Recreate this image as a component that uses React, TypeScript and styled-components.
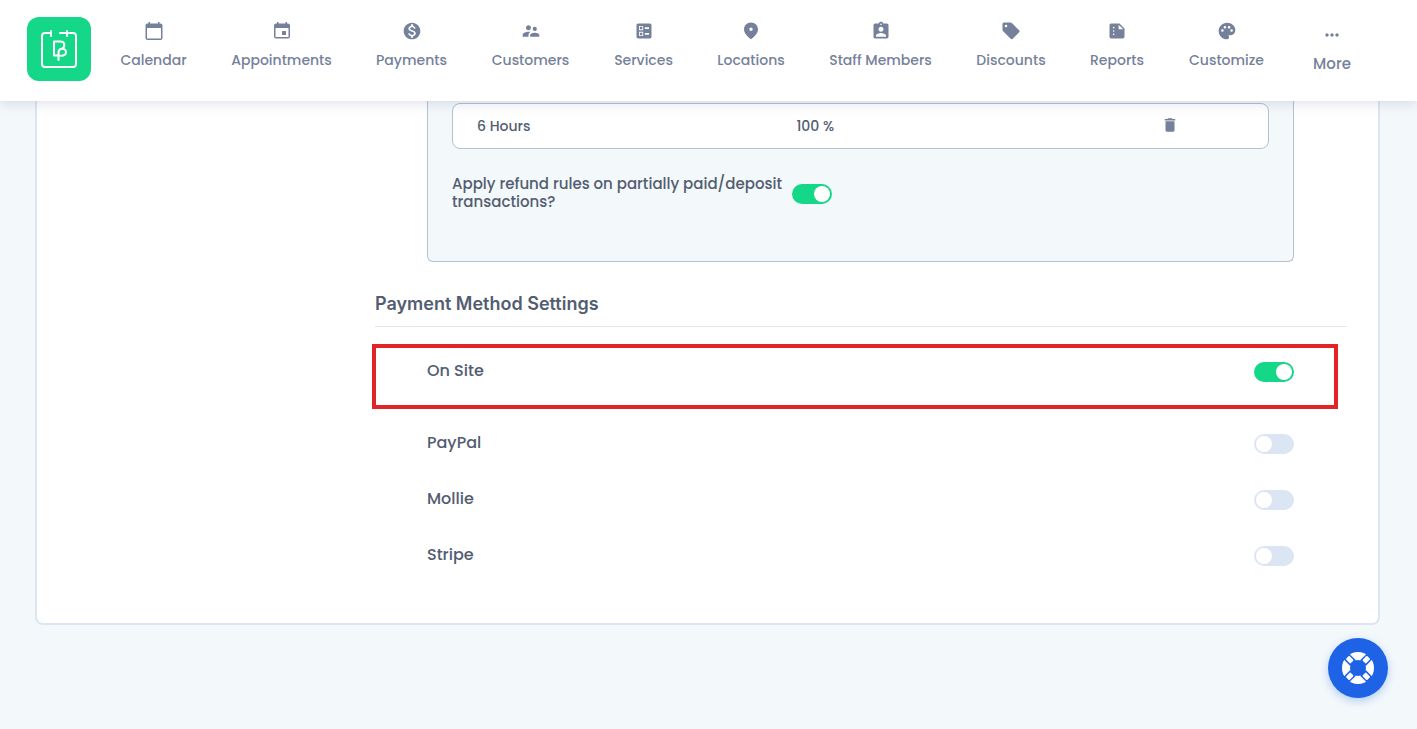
import React, { useState } from 'react';
import styled, { createGlobalStyle } from 'styled-components';
import {
  MdAssignmentInd,
  MdBallot,
  MdDelete,
  MdMonetizationOn,
  MdMoreHoriz,
  MdPalette,
  MdSummarize,
  MdSupervisorAccount,
} from 'react-icons/md';

const GlobalStyle = createGlobalStyle`
  *, *::before, *::after { box-sizing: border-box; }
  body {
    margin: 0;
    background: #f3f8fb;
    color: #535d71;
    font-family: Poppins, Inter, sans-serif;
  }
`;

const Page = styled.div`
  min-height: 100vh;
`;

const Header = styled.header`
  position: sticky;
  top: 0;
  z-index: 2;
  display: flex;
  align-items: flex-start;
  height: 101px;
  padding: 17px 40px 0 27px;
  background: #fff;
  box-shadow: 0 2px 12px rgba(83, 93, 145, 0.2);
`;

const LogoLink = styled.a`
  display: block;
  flex: none;
  width: 64px;
  height: 64px;
  margin-right: 7px;
  border-radius: 12px;
  background: #14d788;
`;

const Nav = styled.nav`
  flex: 1;
  display: grid;
  grid-template-columns: 111fr 145fr 115fr 123fr 103fr 112fr 147fr 114fr 98fr 121fr 90fr;
`;

const NavLink = styled.a<{ $low?: boolean }>`
  display: flex;
  flex-direction: column;
  align-items: center;
  gap: 9px;
  padding-top: ${(p) => (p.$low ? 8 : 4)}px;
  color: #75819a;
  font-size: ${(p) => (p.$low ? 15 : 14)}px;
  font-weight: 500;
  line-height: 20px;
  white-space: nowrap;
  text-decoration: none;

  svg {
    width: 20px;
    height: 20px;
  }
`;

const Card = styled.main`
  margin: 0 37px 104px 35px;
  padding: 0 31px 30px 338px;
  border: 2px solid #dce5f1;
  border-top: 0;
  border-radius: 0 0 8px 8px;
  background: #fff;
`;

const RefundPanel = styled.section`
  margin: 0 53px 0 52px;
  padding: 2px 24px 50px;
  border: 1px solid #b4c0d4;
  border-top: 0;
  border-radius: 0 0 6px 6px;
  background: #f3f8fb;
`;

const RuleRow = styled.div`
  display: grid;
  grid-template-columns: 319fr 364fr 107fr;
  align-items: center;
  height: 46px;
  padding-left: 24px;
  border: 1px solid #b4c0d4;
  border-radius: 8px;
  background: #fff;
  font-size: 14px;
  font-weight: 500;
  line-height: 20px;
`;

const IconButton = styled.button`
  justify-self: start;
  display: flex;
  padding: 0 0 2px;
  border: 0;
  background: none;
  color: #75819a;
  cursor: pointer;

  svg {
    width: 18px;
    height: 18px;
  }
`;

const PartialRule = styled.div`
  display: flex;
  align-items: center;
  gap: 6px;
  padding-top: 26px;
`;

const PartialLabel = styled.label`
  width: 334px;
  font-size: 15px;
  font-weight: 500;
  line-height: 18px;
`;

const SectionTitle = styled.h2`
  margin: 28px 0 17px;
  padding-bottom: 8px;
  border-bottom: 1px solid #e0e7ef;
  font-family: Inter, sans-serif;
  font-size: 18px;
  font-weight: 600;
  line-height: 28px;
`;

const MethodRow = styled.div<{ $highlighted?: boolean }>`
  display: flex;
  align-items: flex-start;
  justify-content: space-between;
  height: ${(p) => (p.$highlighted ? 65 : 56)}px;
  margin: ${(p) => (p.$highlighted ? '0 9px 16px -3px' : '0')};
  padding: ${(p) => (p.$highlighted ? '13px 40px 0 51px' : '8px 53px 0 52px')};
  border: ${(p) => (p.$highlighted ? '4px solid #e02427' : '0')};
`;

const MethodLabel = styled.label`
  font-size: 16px;
  font-weight: 500;
  line-height: 20px;
`;

const Toggle = styled.input`
  appearance: none;
  flex: none;
  width: 40px;
  height: 20px;
  margin: 1px 0 0;
  padding: 2px;
  border-radius: 10px;
  background: #dce5f3;
  cursor: pointer;

  &::before {
    content: '';
    display: block;
    width: 16px;
    height: 16px;
    border-radius: 50%;
    background: #fff;
  }

  &:checked {
    background: #14d788;
  }

  &:checked::before {
    margin-left: 20px;
  }
`;

const HelpButton = styled.button`
  position: fixed;
  right: 29px;
  bottom: 31px;
  z-index: 3;
  display: grid;
  place-items: center;
  width: 60px;
  height: 60px;
  padding: 0;
  border: 0;
  border-radius: 50%;
  background: #1e63e6;
  box-shadow: 0 3px 8px rgba(30, 99, 230, 0.3);
  cursor: pointer;
`;

const Logo = () => (
  <svg width="64" height="64" viewBox="0 0 64 64" fill="none" stroke="#fff" strokeWidth="2" strokeLinecap="round" strokeLinejoin="round">
    <path d="M24 16H18Q15 16 15 19V47Q15 50 18 50H46Q49 50 49 47V19Q49 16 46 16H33" />
    <path d="M24 14V19M40 14V19" />
    <path d="M31.500 38.500H27V24.500H33.500C38.500 24.500 38.500 31 34 32C31.500 32.500 31.500 34 31.500 36V43M31.500 36C31.500 30 39 31 39 35C39 39 34 39.500 31.500 38" />
  </svg>
);

const CalendarIcon = () => (
  <svg viewBox="0 0 20 20" fill="currentColor">
    <path fillRule="evenodd" d="M4.500 1H6v1.500h8V1h1.500v1.500h1q2 0 2 2V17q0 2-2 2h-13q-2 0-2-2V4.500q0-2 2-2h1zM3 7v10.500h14V7z" />
  </svg>
);

const EventIcon = () => (
  <svg viewBox="0 0 20 20" fill="currentColor">
    <path fillRule="evenodd" d="M5 1h1.500v1.500h7V1H15v1.500h1q2 0 2 2v11q0 2-2 2H4q-2 0-2-2v-11q0-2 2-2h1zM3.500 7v9h13V7z" />
    <rect x="10" y="10" width="4" height="4" rx="0.500" />
  </svg>
);

const PinIcon = () => (
  <svg viewBox="0 0 20 20" fill="currentColor">
    <path fillRule="evenodd" d="M10 1.500c4 0 7 3 7 6.800 0 4.200-3.500 7.400-7 10-3.500-2.600-7-5.800-7-10 0-3.800 3-6.800 7-6.800zm0 5.100a1.700 1.700 0 1 0 0 3.400 1.700 1.700 0 0 0 0-3.400z" />
  </svg>
);

const TagIcon = () => (
  <svg viewBox="0 0 20 20" fill="currentColor">
    <path fillRule="evenodd" d="M3 1.500h6.500q.8 0 1.400.6l7.200 7.200q1 1 0 2l-6.400 6.400q-1 1-2 0L2.100 10.200q-.6-.6-.6-1.400V3q0-1.500 1.500-1.500zM5 3.700a1.300 1.300 0 1 0 0 2.600 1.300 1.300 0 0 0 0-2.600z" />
  </svg>
);

const LifebuoyIcon = () => (
  <svg width="32" height="32" viewBox="0 0 32 32">
    <circle cx="16" cy="16" r="12" fill="none" stroke="#fff" strokeWidth="8" />
    {[45, 135, 225, 315].map((angle) => (
      <g key={angle} transform={`rotate(${angle} 16 16)`}>
        <rect x="12" y="-1" width="8" height="10" fill="#1e63e6" />
        <rect x="13.500" y="1" width="5" height="6.500" rx="1" fill="#fff" />
      </g>
    ))}
  </svg>
);

const NAV_ITEMS = [
  { label: 'Calendar', icon: <CalendarIcon /> },
  { label: 'Appointments', icon: <EventIcon /> },
  { label: 'Payments', icon: <MdMonetizationOn /> },
  { label: 'Customers', icon: <MdSupervisorAccount /> },
  { label: 'Services', icon: <MdBallot /> },
  { label: 'Locations', icon: <PinIcon /> },
  { label: 'Staff Members', icon: <MdAssignmentInd /> },
  { label: 'Discounts', icon: <TagIcon /> },
  { label: 'Reports', icon: <MdSummarize /> },
  { label: 'Customize', icon: <MdPalette /> },
  { label: 'More', icon: <MdMoreHoriz />, low: true },
];

const METHODS = ['On Site', 'PayPal', 'Mollie', 'Stripe'];

export default function App() {
  const [partialRefund, setPartialRefund] = useState(true);
  const [enabled, setEnabled] = useState<Record<string, boolean>>({ 'On Site': true });

  return (
    <Page>
      <GlobalStyle />
      <Header>
        <LogoLink href="#home" aria-label="Home">
          <Logo />
        </LogoLink>
        <Nav>
          {NAV_ITEMS.map((item) => (
            <NavLink key={item.label} href={`#${item.label}`} $low={item.low}>
              {item.icon}
              {item.label}
            </NavLink>
          ))}
        </Nav>
      </Header>

      <Card>
        <RefundPanel>
          <RuleRow>
            <span>6 Hours</span>
            <span>100 %</span>
            <IconButton type="button" aria-label="Delete rule">
              <MdDelete />
            </IconButton>
          </RuleRow>
          <PartialRule>
            <PartialLabel htmlFor="partial-refund">
              Apply refund rules on partially paid/deposit transactions?
            </PartialLabel>
            <Toggle
              id="partial-refund"
              type="checkbox"
              checked={partialRefund}
              onChange={(e) => setPartialRefund(e.target.checked)}
            />
          </PartialRule>
        </RefundPanel>

        <SectionTitle>Payment Method Settings</SectionTitle>
        {METHODS.map((name) => (
          <MethodRow key={name} $highlighted={name === 'On Site'}>
            <MethodLabel htmlFor={`method-${name}`}>{name}</MethodLabel>
            <Toggle
              id={`method-${name}`}
              type="checkbox"
              checked={!!enabled[name]}
              onChange={(e) => setEnabled({ ...enabled, [name]: e.target.checked })}
            />
          </MethodRow>
        ))}
      </Card>

      <HelpButton type="button" aria-label="Help">
        <LifebuoyIcon />
      </HelpButton>
    </Page>
  );
}
